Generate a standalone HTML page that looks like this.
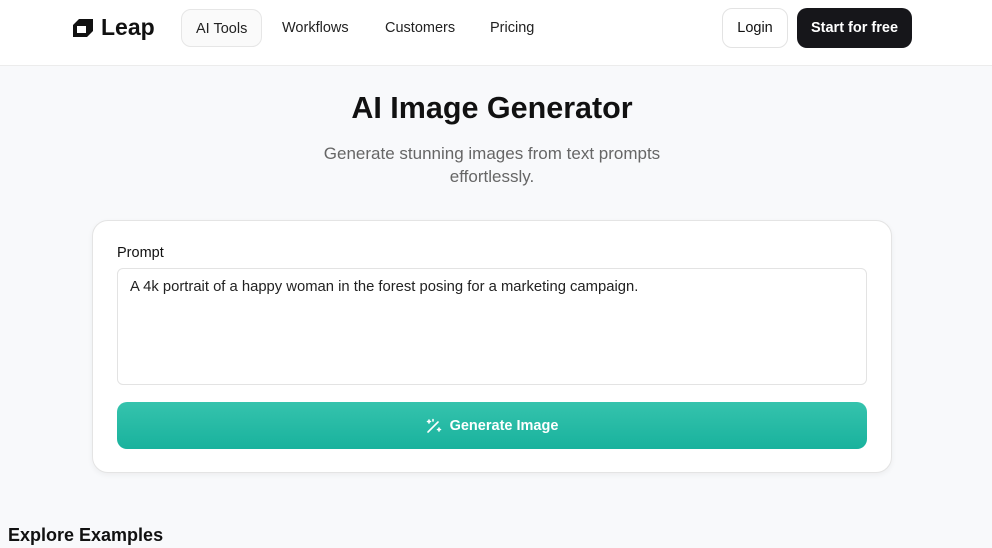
<!DOCTYPE html>
<html><head><style>
*{box-sizing:border-box;margin:0;padding:0}
body{width:992px;height:548px;overflow:hidden;background:#f8f9fb;font-family:"Liberation Sans",sans-serif;color:#111;position:relative}
.nav{position:absolute;top:0;left:0;width:992px;height:66px;background:#fff;border-bottom:1px solid #ececec}
.logo{position:absolute;left:72px;top:14px;font-size:23px;font-weight:700;display:flex;align-items:center;gap:7px}
.tab{position:absolute;top:9px;height:38px;line-height:38px;font-size:14.5px;color:#222}
.pill{border:1px solid #e6e6e6;border-radius:10px;background:#fafafa;padding:0 14px}
.login{position:absolute;left:722px;top:8px;width:66px;height:40px;border:1px solid #e3e3e3;border-radius:10px;background:#fff;text-align:center;line-height:38px;font-size:14.5px}
.start{position:absolute;left:797px;top:8px;width:115px;height:40px;border-radius:10px;background:#16161a;color:#fff;text-align:center;line-height:40px;font-size:14.5px;font-weight:700}
h1{position:absolute;top:91px;width:984px;text-align:center;font-size:30.5px;font-weight:700}
.sub{position:absolute;top:142px;left:0;width:984px;text-align:center;font-size:17px;color:#666;line-height:23px}
.card{position:absolute;left:92px;top:220px;width:800px;height:253px;background:#fff;border:1px solid #e4e4e4;border-radius:16px;box-shadow:0 2px 6px rgba(0,0,0,.05)}
.lbl{position:absolute;left:24px;top:24px;font-size:14.5px}
.ta{position:absolute;left:24px;top:47px;width:750px;height:117px;border:1px solid #e3e3e3;border-radius:6px;padding:10px 12px;font-size:14.8px;color:#222}
.btn{position:absolute;left:24px;top:181px;width:750px;height:47px;border-radius:10px;background:linear-gradient(#35c3ad,#19b29d);color:#fff;font-size:14.5px;font-weight:700;display:flex;align-items:center;justify-content:center;gap:8px}
.ex{position:absolute;left:8px;top:525px;font-size:18px;font-weight:700}
</style></head><body>
<div class="nav">
<div class="logo"><svg width="22" height="20" viewBox="0 0 22 20"><path d="M1 7 L7 1 H21 V13 L15 19 H1 Z M5 8 V15 H14 V8 Z" fill="#111" fill-rule="evenodd"/></svg>Leap</div>
<div class="tab pill" style="left:181px">AI Tools</div>
<div class="tab" style="left:282px">Workflows</div>
<div class="tab" style="left:385px">Customers</div>
<div class="tab" style="left:490px">Pricing</div>
<div class="login">Login</div>
<div class="start">Start for free</div>
</div>
<h1>AI Image Generator</h1>
<div class="sub">Generate stunning images from text prompts<br>effortlessly.</div>
<div class="card">
<div class="lbl">Prompt</div>
<div class="ta">A 4k portrait of a happy woman in the forest posing for a marketing campaign.</div>
<div class="btn"><svg width="16" height="16" viewBox="0 0 16 16" stroke="#fff" stroke-width="1.6" fill="none" stroke-linecap="round"><path d="M2 14 L12 4"/><path d="M3 2v3M1.5 3.5h3M13 10v3M11.5 11.5h3M7 1.5v1.5"/></svg>Generate Image</div>
</div>
<div class="ex">Explore Examples</div>
</body></html>
